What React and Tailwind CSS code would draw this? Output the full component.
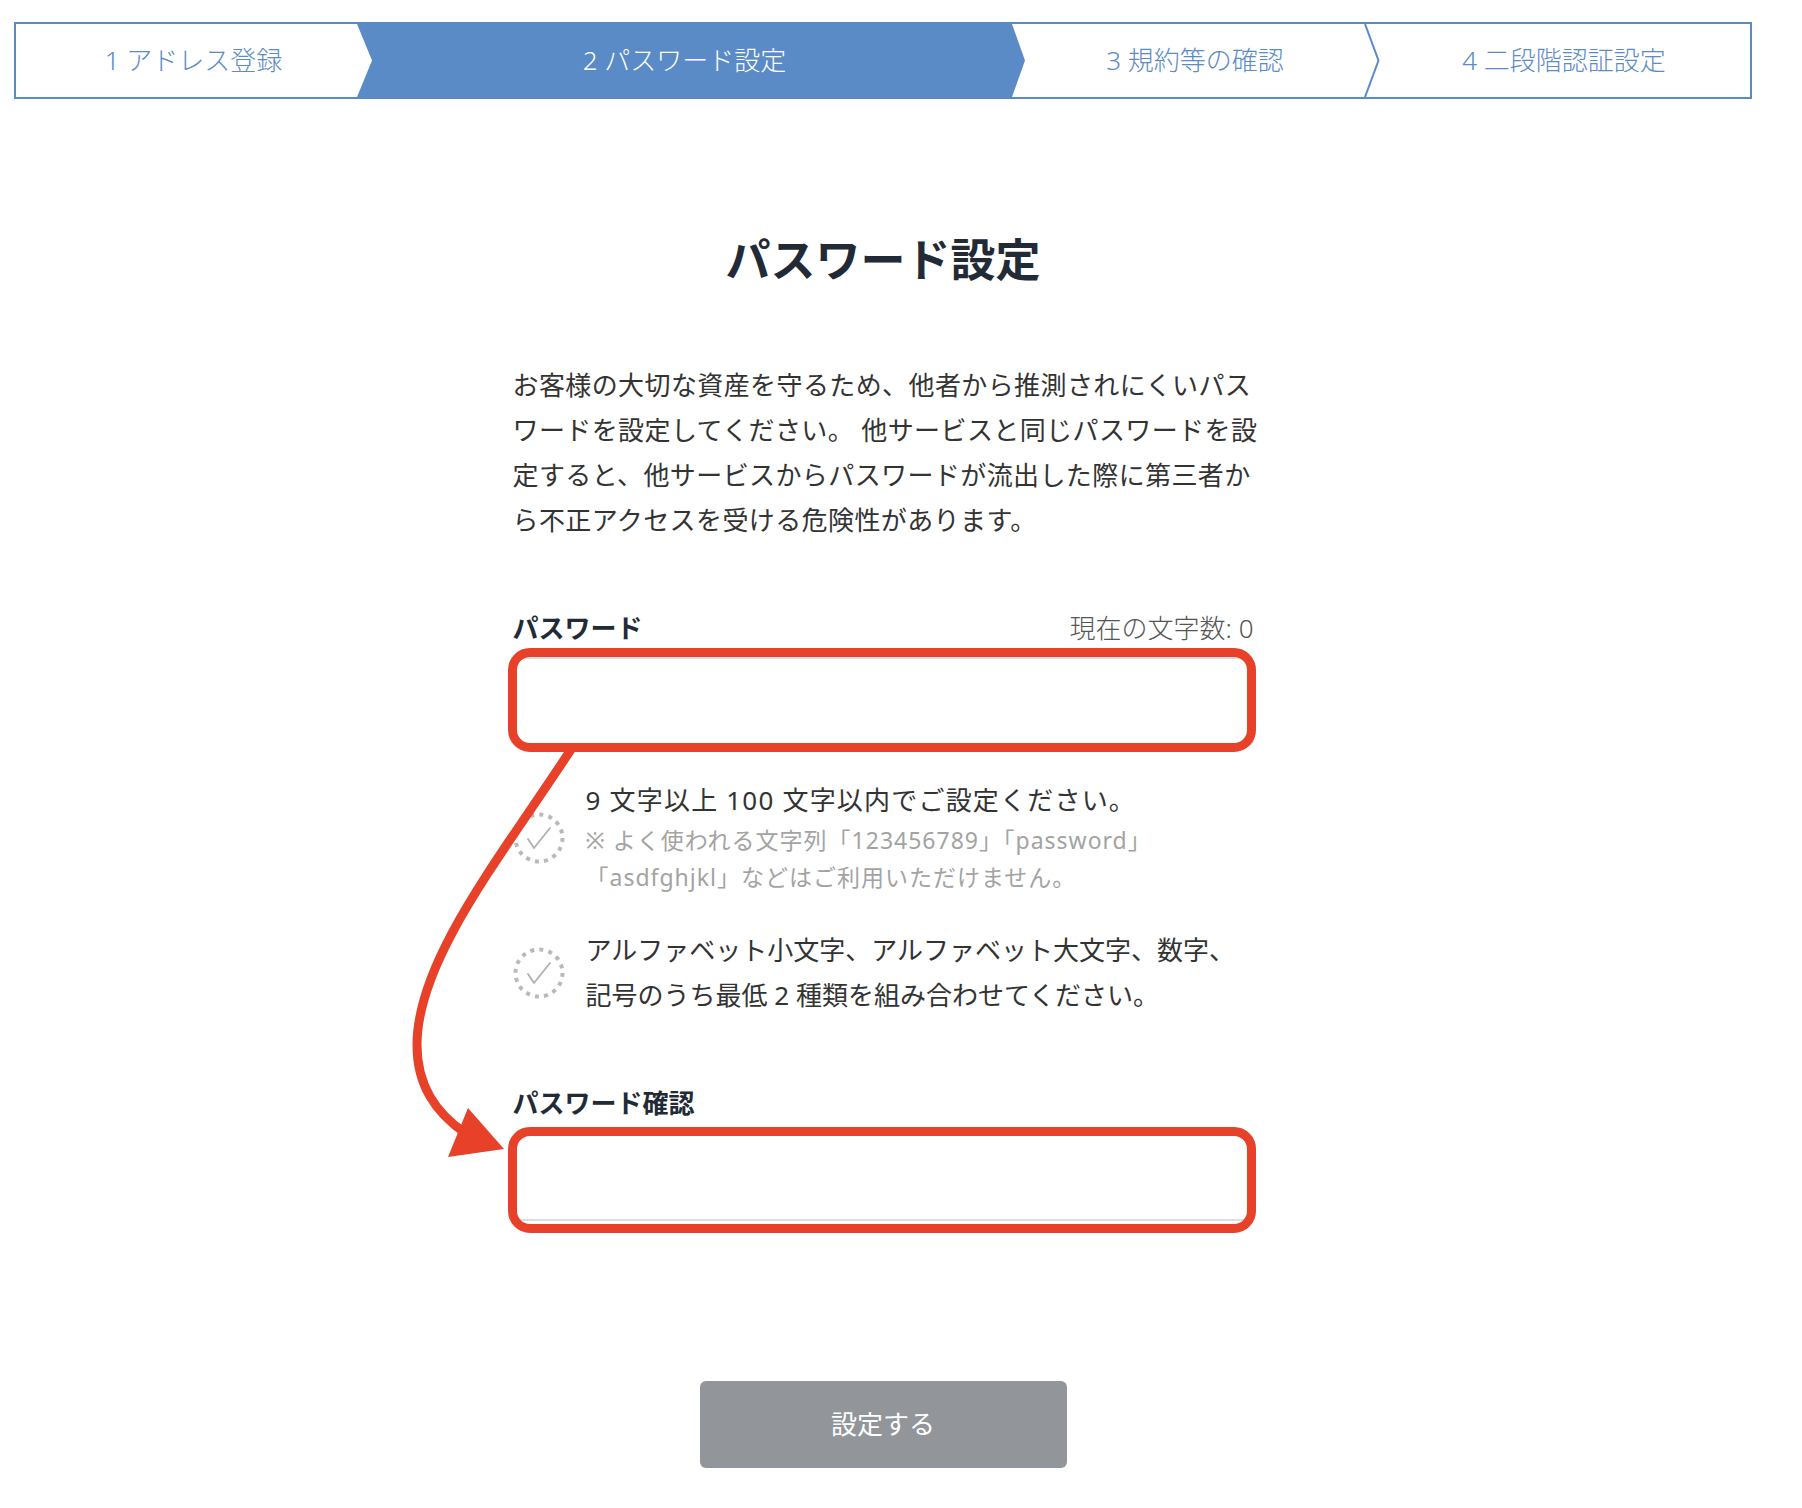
import React from "react"

const BLUE = "#5b8bc7"

function CheckCircle() {
    return (
        <svg width="52" height="52" viewBox="0 0 52 52" className="shrink-0">
            <circle cx="26" cy="26" r="23.5" fill="none" stroke="#b9b9b9" strokeWidth="4" strokeDasharray="4 5.2" />
            <polyline points="15,27 21,36 37,16" fill="none" stroke="#b0b0b0" strokeWidth="1.8" strokeLinecap="round" strokeLinejoin="round" />
        </svg>
    )
}

function StepBar() {
    return (
        <div className="flex h-[77px] border-2 border-[#5b8bc7] text-[26px] font-light">
            <div className="relative flex w-[341px] items-center justify-center bg-white pl-[14px] text-[#5b8bc7]">
                1 アドレス登録
                <svg className="absolute left-full top-0 z-10 h-full w-[15px]" viewBox="0 0 15 73" preserveAspectRatio="none">
                    <polygon points="0,0 15,36.5 0,73" fill="#fff" />
                </svg>
            </div>
            <div className="relative flex w-[655px] items-center justify-center bg-[#5b8bc7] text-white">
                2 パスワード設定
                <svg className="absolute left-full top-0 z-10 h-full w-[13px]" viewBox="0 0 13 73" preserveAspectRatio="none">
                    <polygon points="0,0 13,36.5 0,73" fill={BLUE} />
                </svg>
            </div>
            <div className="relative flex w-[352px] items-center justify-center bg-white pl-[14px] text-[#5b8bc7]">
                3 規約等の確認
                <svg className="absolute left-full top-0 z-10 h-full w-[16px]" viewBox="0 0 16 73" preserveAspectRatio="none">
                    <polyline points="1,0 14.5,36.5 1,73" fill="none" stroke={BLUE} strokeWidth="2" />
                </svg>
            </div>
            <div className="flex flex-1 items-center justify-center bg-white pl-[14px] text-[#5b8bc7]">
                4 二段階認証設定
            </div>
        </div>
    )
}

export default function App() {
    return (
        <div className="relative h-[1508px] w-[1802px] overflow-hidden bg-white font-['Noto_Sans','Noto_Sans_CJK_JP',sans-serif]">
            <div className="ml-[14px] w-[1738px] pt-[22px]">
                <StepBar />

                <div className="mx-auto w-[741px]">
                    <h1 className="mt-[131px] text-center text-[45px] font-bold leading-[60px] text-[#222a36]">パスワード設定</h1>

                    <p className="mt-[73px] whitespace-nowrap text-[26px] leading-[45px] tracking-[0.4px] text-[#333]">
                        お客様の大切な資産を守るため、他者から推測されにくいパス<br />
                        ワードを設定してください。 他サービスと同じパスワードを設<br />
                        定すると、他サービスからパスワードが流出した際に第三者か<br />
                        ら不正アクセスを受ける危険性があります。
                    </p>

                    <div className="mt-[67px] flex items-center justify-between leading-[36px]">
                        <span className="text-[26px] font-bold text-[#222a36]">パスワード</span>
                        <span className="text-[26px] font-light text-[#555]">現在の文字数: 0</span>
                    </div>
                    <div className="relative mt-[11px]">
                        <input type="password" className="block h-[89px] w-full rounded-[6px] border-2 border-[#dedede] bg-white px-4 outline-none" />
                        <span className="pointer-events-none absolute -bottom-[6px] -left-[5px] -right-[2px] -top-[9px] rounded-[22px] border-[9px] border-[#e8412a]" />
                    </div>

                    <div className="mt-[34px] flex items-center gap-[21px]">
                        <CheckCircle />
                        <div>
                            <p className="text-[26px] leading-[40px] tracking-[1.2px] text-[#333]">9 文字以上 100 文字以内でご設定ください。</p>
                            <p className="mt-[2px] text-[23px] leading-[37px] tracking-[1px] text-[#a3a3a3]">
                                ※ よく使われる文字列「123456789」「password」<br />
                                「asdfghjkl」などはご利用いただけません。
                            </p>
                        </div>
                    </div>

                    <div className="mt-[32px] flex items-center gap-[21px]">
                        <CheckCircle />
                        <p className="text-[26px] leading-[45px] text-[#333]">
                            アルファベット小文字、アルファベット大文字、数字、<br />
                            記号のうち最低 2 種類を組み合わせてください。
                        </p>
                    </div>

                    <div className="mt-[67px] text-[26px] font-bold leading-[36px] text-[#222a36]">パスワード確認</div>
                    <div className="relative mt-[13px]">
                        <input type="password" className="block h-[87px] w-full rounded-[6px] border-2 border-[#dedede] bg-white px-4 outline-none" />
                        <span className="pointer-events-none absolute -bottom-[12px] -left-[5px] -right-[2px] -top-[7px] rounded-[22px] border-[9px] border-[#e8412a]" />
                    </div>

                    <div className="mt-[160px] flex justify-center">
                        <button className="h-[87px] w-[367px] rounded-[6px] bg-[#92969a] text-[26px] text-white">設定する</button>
                    </div>
                </div>
            </div>

            {/* red arrow from the first field down to the confirmation field */}
            <svg className="pointer-events-none absolute left-0 top-0" width="1802" height="1508" viewBox="0 0 1802 1508">
                <path d="M572 748 C500 858 417 960 417 1045 C417 1085 435 1112 465 1133" fill="none" stroke="#e8412a" strokeWidth="9" strokeLinecap="round" />
                <polygon points="448,1157 468,1108 504,1149" fill="#e8412a" />
            </svg>
        </div>
    )
}
